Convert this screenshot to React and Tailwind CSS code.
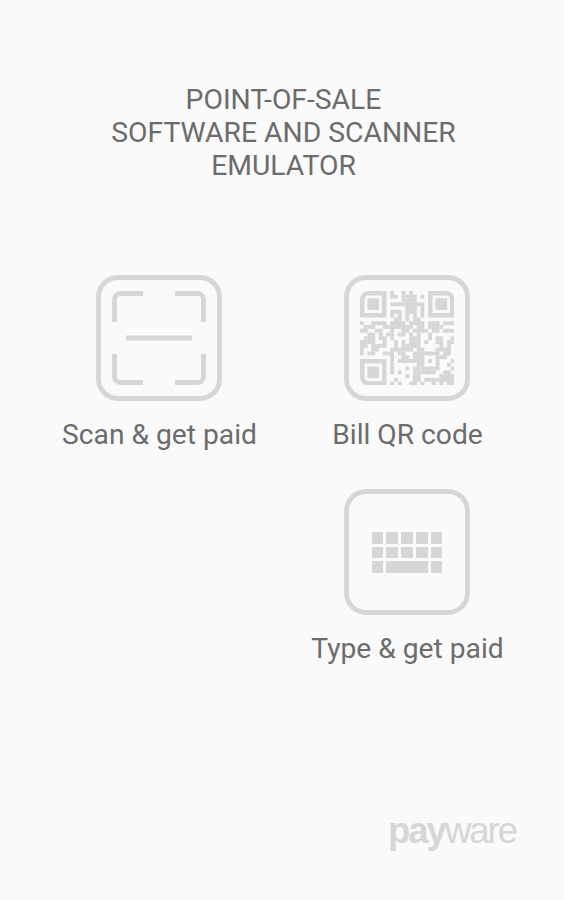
const QR_ROWS = [
  '........#..#.#...........',
  '........##.####.#........',
  '...........####..........',
  '........#########........',
  '............###.#........',
  '........###.###.#........',
  '........#.#.#.#.#........',
  '.........##.#.##.........',
  '#..####.####.####.###.###',
  '.###..########.##.####...',
  '##..##..#..##.####.##.###',
  '..##.#.##.##.#.#..#......',
  '.###.##.#....###..#.##..#',
  '####..#..#.#.###.#..##.##',
  '##.####..#.#####.....#.#.',
  '#..##...######.##...####.',
  '#.##..###.##..#######.##.',
  '........#..##.###...###..',
  '........#.#######.#.#...#',
  '........#......##...#..#.',
  '........#...#.#######...#',
  '........#.#...######..##.',
  '............#.##.....####',
  '.........#....##.########',
  '........#.#..##.#..#.#.##',
];

function Tile({ label, children }) {
  return (
    <div className="flex w-[248px] flex-col items-center">
      <div className="flex h-[126px] w-[126px] items-center justify-center rounded-[22px] border-[5px] border-[#d6d6d6]">
        {children}
      </div>
      <span className="mt-[17px] whitespace-nowrap pl-px text-[28.2px] leading-[33px]">{label}</span>
    </div>
  );
}

function ScanIcon() {
  return (
    <svg width="96" height="96" viewBox="0 0 96 96" fill="none" stroke="#d6d6d6" strokeWidth="5">
      <path d="M3.5 32V9.5a6 6 0 0 1 6-6H32M64 3.5h22.5a6 6 0 0 1 6 6V32M92.5 64v22.5a6 6 0 0 1-6 6H64M32 92.5H9.5a6 6 0 0 1-6-6V64M15 48h66" />
    </svg>
  );
}

function QrIcon() {
  return (
    <svg width="94.5" height="94.5" viewBox="0 0 25 25" fill="#d6d6d6">
      {QR_ROWS.map((row, y) =>
        [...row].map((cell, x) => cell === '#' && <rect key={`${x}-${y}`} x={x} y={y} width="1.03" height="1.03" />)
      )}
      <g fill="none" stroke="#d6d6d6" strokeWidth="1.2">
        <path d="M2.2 .6H6.4V6.4H.6V2.2A1.6 1.6 0 0 1 2.2 .6Z" />
        <path d="M18.6 .6H22.8A1.6 1.6 0 0 1 24.4 2.2V6.4H18.6Z" />
        <path d="M.6 18.6H6.4V24.4H2.2A1.6 1.6 0 0 1 .6 22.8Z" />
      </g>
      <path d="M1.95 1.95h3.1v3.1h-3.1zM19.95 1.95h3.1v3.1h-3.1zM1.95 19.95h3.1v3.1h-3.1z" />
    </svg>
  );
}

function KeyboardIcon() {
  return (
    <div className="mt-px grid grid-cols-5 gap-[3px]">
      {Array.from({ length: 11 }, (_, i) => (
        <span key={i} className="h-[11.5px] w-[11.8px] bg-[#d6d6d6]" />
      ))}
      <span className="col-span-3 bg-[#d6d6d6]" />
      <span className="h-[11.5px] w-[11.8px] bg-[#d6d6d6]" />
    </div>
  );
}

export default function App() {
  return (
    <main className="flex h-[900px] w-[564px] flex-col bg-[#fafafa] font-['Roboto',sans-serif] text-[#6c6c6c]">
      <h1 className="mt-[83px] pl-[3px] text-center text-[28.3px] leading-[33px]">
        POINT-OF-SALE
        <br />
        SOFTWARE AND SCANNER
        <br />
        EMULATOR
      </h1>
      <div className="ml-[35px] mt-[93px] grid w-[496px] grid-cols-2 gap-y-[38px]">
        <Tile label="Scan & get paid">
          <ScanIcon />
        </Tile>
        <Tile label="Bill QR code">
          <QrIcon />
        </Tile>
        <div className="col-start-2">
          <Tile label="Type & get paid">
            <KeyboardIcon />
          </Tile>
        </div>
      </div>
      <div className="mb-[47px] mr-[48px] mt-auto self-end font-['Liberation_Sans',Arial,sans-serif] text-[36.5px] leading-[44px] tracking-[-2px] text-[#d6d6d6]">
        <b>pay</b>ware
      </div>
    </main>
  );
}
